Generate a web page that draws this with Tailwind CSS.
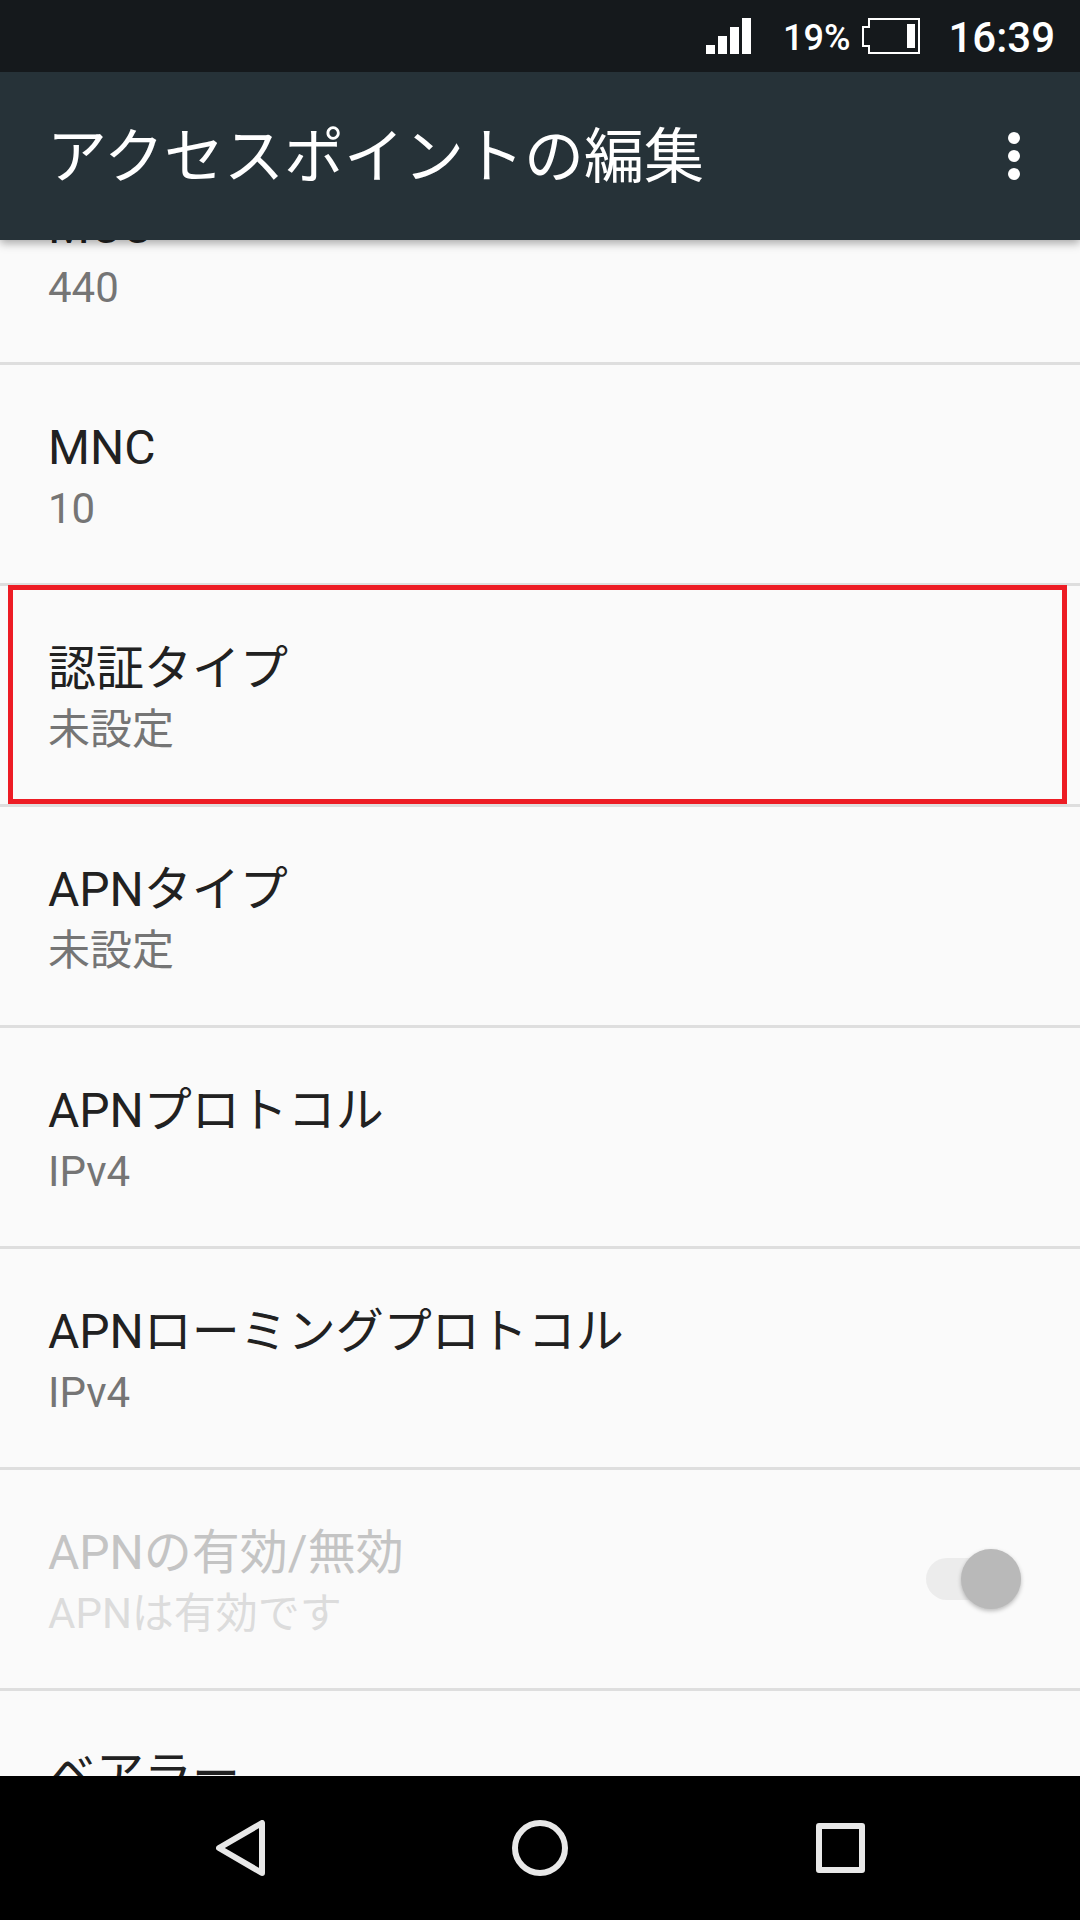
<!DOCTYPE html>
<html lang="ja">
<head>
    <meta charset="UTF-8">
    <meta name="viewport" content="width=device-width, initial-scale=1.0">
    <title>アクセスポイントの編集</title>
    <script src="https://cdn.jsdelivr.net/npm/@tailwindcss/browser@4"></script>
</head>
<body class="w-[1080px] h-[1920px] overflow-hidden flex flex-col bg-[#fafafa] font-[Roboto,'Noto_Sans_CJK_JP',sans-serif]">

    <!-- Status bar -->
    <div class="h-[72px] shrink-0 bg-[#15191c] flex items-center justify-end pr-[25px] text-white relative z-20">
        <svg class="w-[45px] h-[36px]" viewBox="0 0 45 36" fill="#fff">
            <rect x="0" y="27" width="9" height="9"/>
            <rect x="12" y="18" width="9" height="18"/>
            <rect x="24" y="9" width="9" height="27"/>
            <rect x="36" y="0" width="9" height="36"/>
        </svg>
        <span class="ml-[32px] mt-[3px] text-[36px] leading-none font-medium">19%</span>
        <svg class="ml-[12px] w-[58px] h-[36px]" viewBox="0 0 58 36" fill="none">
            <path d="M7 1H57V35H7V28H1V9H7Z" stroke="#fff" stroke-width="2"/>
            <rect x="45" y="6" width="8" height="24" fill="#fff"/>
        </svg>
        <span class="ml-[28px] mt-[4px] text-[42px] leading-none font-medium">16:39</span>
    </div>

    <!-- App bar -->
    <header class="h-[168px] shrink-0 bg-[#263238] flex items-center justify-between pl-[47px] pr-[60px] relative z-10 shadow-[0_3px_9px_rgba(0,0,0,0.35)]">
        <h1 class="mt-[4px] text-[60px] leading-none font-normal text-white">アクセスポイントの編集</h1>
        <div class="flex flex-col gap-[6px]">
            <div class="w-[12px] h-[12px] rounded-full bg-white"></div>
            <div class="w-[12px] h-[12px] rounded-full bg-white"></div>
            <div class="w-[12px] h-[12px] rounded-full bg-white"></div>
        </div>
    </header>

    <!-- Preference list -->
    <main class="flex-1 overflow-hidden">
        <div class="-mt-[96px]">
            <div class="h-[221px] border-b-[3px] border-[#dedede] pl-[48px] pt-[5px] flex flex-col justify-center">
                <div class="mb-[2px] text-[48px] leading-[62px] text-[#212121]">MCC</div>
                <div class="text-[42px] leading-[56px] text-[#757575]">440</div>
            </div>
            <div class="h-[221px] border-b-[3px] border-[#dedede] pl-[48px] pt-[5px] flex flex-col justify-center">
                <div class="mb-[2px] text-[48px] leading-[62px] text-[#212121]">MNC</div>
                <div class="text-[42px] leading-[56px] text-[#757575]">10</div>
            </div>
            <div class="h-[221px] border-b-[3px] border-[#dedede] pl-[48px] pt-[5px] flex flex-col justify-center relative">
                <div class="mb-[2px] text-[48px] leading-[62px] text-[#212121]">認証タイプ</div>
                <div class="text-[42px] leading-[56px] text-[#757575]">未設定</div>
                <!-- highlight added on top of the screenshot -->
                <div class="absolute -top-px left-[8px] w-[1059px] h-[219px] border-[5px] border-[#ed1c24]"></div>
            </div>
            <div class="h-[221px] border-b-[3px] border-[#dedede] pl-[48px] pt-[5px] flex flex-col justify-center">
                <div class="mb-[2px] text-[48px] leading-[62px] text-[#212121]">APNタイプ</div>
                <div class="text-[42px] leading-[56px] text-[#757575]">未設定</div>
            </div>
            <div class="h-[221px] border-b-[3px] border-[#dedede] pl-[48px] pt-[5px] flex flex-col justify-center">
                <div class="mb-[2px] text-[48px] leading-[62px] text-[#212121]">APNプロトコル</div>
                <div class="text-[42px] leading-[56px] text-[#757575]">IPv4</div>
            </div>
            <div class="h-[221px] border-b-[3px] border-[#dedede] pl-[48px] pt-[5px] flex flex-col justify-center">
                <div class="mb-[2px] text-[48px] leading-[62px] text-[#212121]">APNローミングプロトコル</div>
                <div class="text-[42px] leading-[56px] text-[#757575]">IPv4</div>
            </div>
            <div class="h-[221px] border-b-[3px] border-[#dedede] pl-[48px] pr-[59px] flex items-center justify-between">
                <div class="mt-[5px]">
                    <div class="mb-[2px] text-[48px] leading-[62px] text-[#c4c4c4]">APNの有効/無効</div>
                    <div class="text-[42px] leading-[56px] text-[#dcdcdc]">APNは有効です</div>
                </div>
                <div class="relative w-[95px] h-[42px] rounded-full bg-[#ececec]">
                    <div class="absolute -top-[9px] right-0 w-[60px] h-[60px] rounded-full bg-[#b9b9b9] shadow-[0_2px_4px_rgba(0,0,0,0.25)]"></div>
                </div>
            </div>
            <div class="h-[221px] pl-[48px] pt-[5px] flex flex-col justify-center">
                <div class="mb-[2px] text-[48px] leading-[62px] text-[#212121]">ベアラー</div>
                <div class="text-[42px] leading-[56px] text-[#757575]">未指定</div>
            </div>
        </div>
    </main>

    <!-- Navigation bar -->
    <nav class="h-[144px] shrink-0 bg-black flex items-center justify-between pl-[216px] pr-[215px] relative z-10">
        <svg class="w-[49px] h-[56px]" viewBox="0 0 49 56" fill="none" stroke="#e8e8e8" stroke-width="6" stroke-linejoin="round">
            <path d="M46 3V53L3 28Z"/>
        </svg>
        <svg class="w-[56px] h-[56px] -ml-[2px]" viewBox="0 0 56 56" fill="none" stroke="#e8e8e8" stroke-width="6">
            <circle cx="28" cy="28" r="25"/>
        </svg>
        <svg class="w-[49px] h-[50px]" viewBox="0 0 49 50" fill="none" stroke="#e8e8e8" stroke-width="6" stroke-linejoin="round">
            <rect x="3" y="3" width="43" height="44"/>
        </svg>
    </nav>

</body>
</html>
